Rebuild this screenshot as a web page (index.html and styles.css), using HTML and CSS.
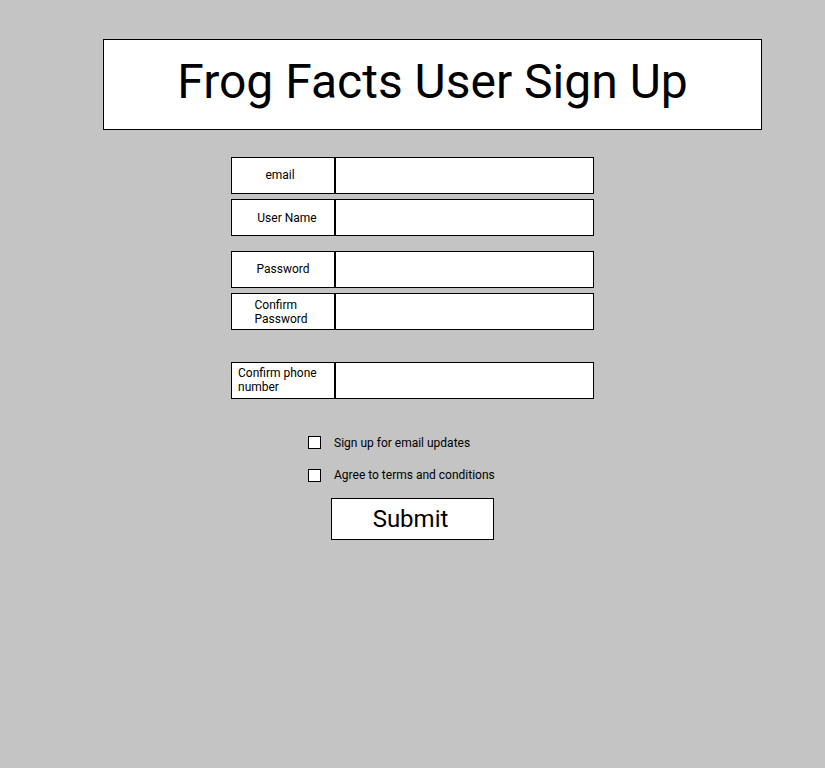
FILE: index.html
```html
<!DOCTYPE html>
<html lang="en">
<head>
<meta charset="utf-8">
<title>Frog Facts User Sign Up</title>
<link rel="stylesheet" href="styles.css">
</head>
<body>
<div class="page">
  <header class="title-box">
    <h1 class="title">Frog Facts User Sign Up</h1>
  </header>
  <form class="form">
    <div class="group">
      <div class="row">
        <label class="label label-email"><span class="label-text shift-left">email</span></label>
        <div class="input"></div>
      </div>
      <div class="row">
        <label class="label"><span class="label-text shift-right">User Name</span></label>
        <div class="input"></div>
      </div>
    </div>
    <div class="group group-pw">
      <div class="row">
        <label class="label label-email"><span class="label-text">Password</span></label>
        <div class="input"></div>
      </div>
      <div class="row">
        <label class="label"><span class="label-text label-wrap">Confirm Password</span></label>
        <div class="input"></div>
      </div>
    </div>
    <div class="group group-phone">
      <div class="row">
        <label class="label label-left"><span class="label-text label-phone">Confirm phone number</span></label>
        <div class="input"></div>
      </div>
    </div>
    <div class="checks">
      <div class="check">
        <span class="box"></span>
        <span class="check-text">Sign up for email updates</span>
      </div>
      <div class="check check-2">
        <span class="box"></span>
        <span class="check-text">Agree to terms and conditions</span>
      </div>
    </div>
    <div class="submit-wrap">
      <div class="submit">Submit</div>
    </div>
  </form>
</div>
</body>
</html>
```
FILE: styles.css
```css
* { box-sizing: border-box; }
html, body {
  margin: 0;
  padding: 0;
  background: #c4c4c4;
  font-family: Roboto, "Liberation Sans", sans-serif;
  color: #000;
}
.page {
  padding-top: 39px;
  width: 825px;
  height: 768px;
}
.title-box {
  margin-left: 103px;
  width: 659px;
  height: 91px;
  border: 1px solid #000;
  background: #fff;
  display: flex;
  align-items: center;
  justify-content: center;
}
.title {
  margin: 0;
  font-weight: 400;
  font-size: 48px;
  line-height: 1;
  padding-bottom: 6px;
}
.form {
  width: 363px;
  margin: 27px auto 0;
}
.group {
  display: flex;
  flex-direction: column;
  gap: 5px;
}
.group-pw { margin-top: 15px; }
.group-phone { margin-top: 32px; }
.row {
  display: flex;
  height: 37px;
}
.label {
  width: 104px;
  border: 1px solid #000;
  background: #fff;
  display: flex;
  align-items: center;
  justify-content: center;
  font-size: 12px;
  line-height: 14px;
}
.label-email { padding-bottom: 2px; }
.label-left {
  justify-content: flex-start;
  padding-left: 6px;
  padding-bottom: 2px;
}
.shift-left { margin-right: 6px; }
.shift-right { margin-left: 8px; }
.label-wrap { width: min-content; margin-right: 4px; }
.label-phone { width: 84px; }
.input {
  flex: 1;
  border: 1px solid #000;
  background: #fff;
}
.checks {
  margin-top: 37px;
  margin-left: 77px;
  display: flex;
  flex-direction: column;
  gap: 20px;
}
.check {
  display: flex;
  align-items: center;
  gap: 13px;
  height: 13px;
  font-size: 12px;
}
.check-2 .check-text { position: relative; top: -1px; }
.box {
  width: 13px;
  height: 13px;
  border: 1px solid #000;
  background: #fff;
  flex: none;
}
.submit-wrap {
  margin-top: 16px;
  display: flex;
  justify-content: center;
}
.submit {
  width: 163px;
  height: 42px;
  border: 1px solid #000;
  background: #fff;
  display: flex;
  align-items: center;
  justify-content: center;
  font-size: 24px;
  padding-right: 4px;
}
```
